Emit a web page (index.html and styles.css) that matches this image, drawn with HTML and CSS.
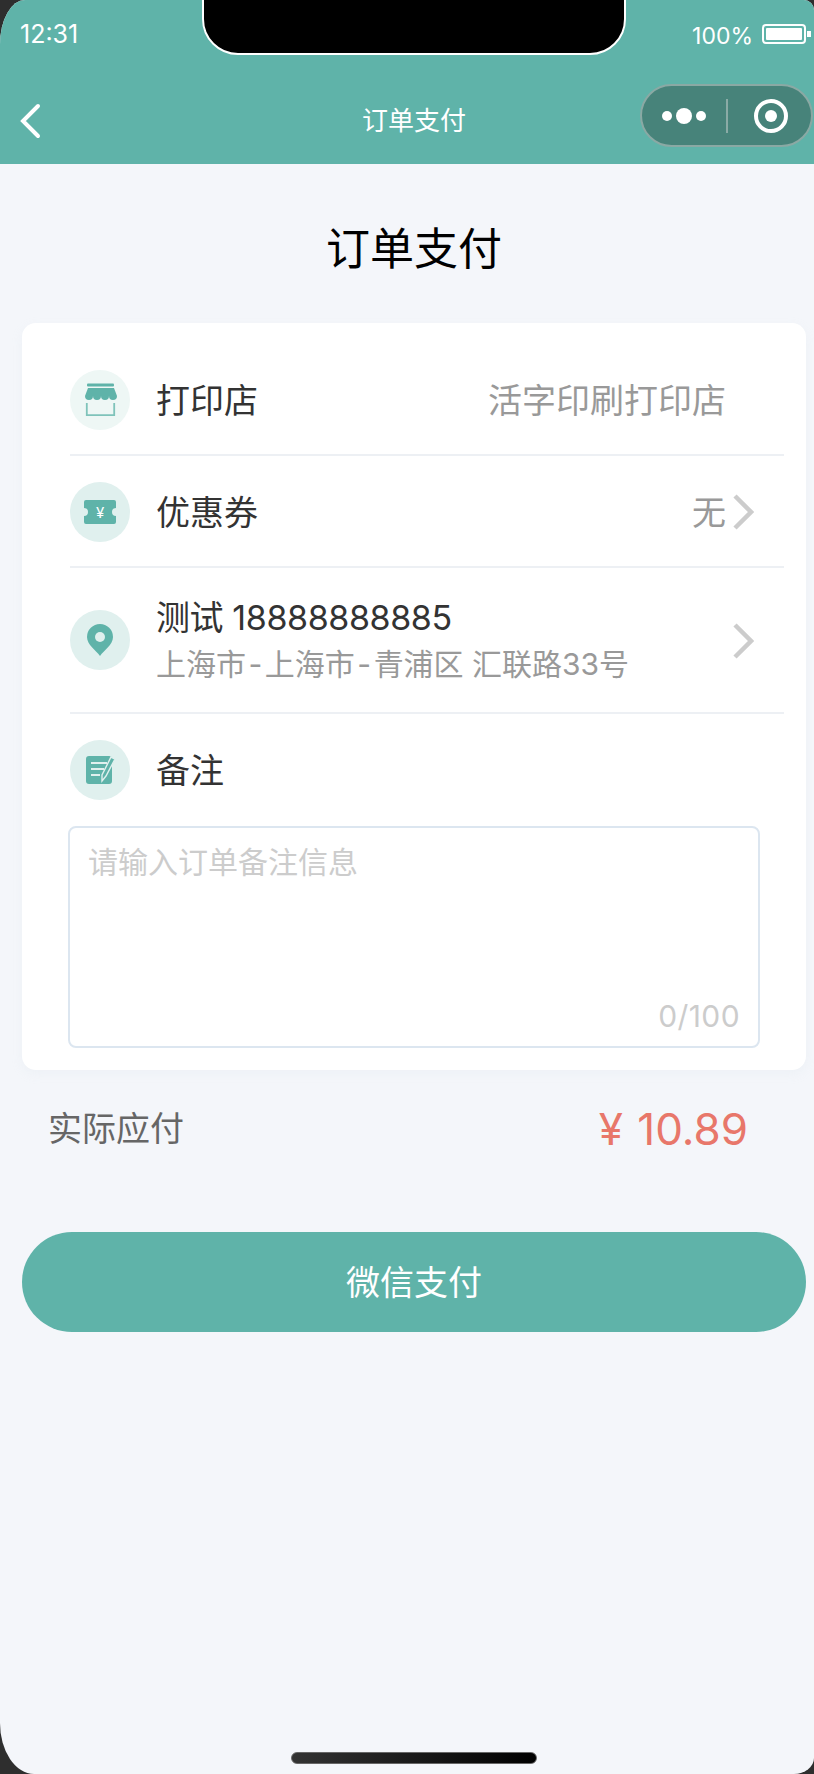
FILE: index.html
```html
<!DOCTYPE html>
<html>
<head>
    <meta charset="utf-8">
    <title>订单支付</title>
    <link rel="stylesheet" href="styles.css">
</head>
<body>
    <div class="phone">
        <div class="notch"></div>

        <header class="topbar">
            <div class="status">
                <span class="time">12:31</span>
                <div class="status-right">
                    <span class="battery-text">100%</span>
                    <svg class="battery" width="49" height="20" viewBox="0 0 49 20">
                        <rect x="1" y="1" width="42" height="18" rx="3" fill="none" stroke="#fff" stroke-width="2"/>
                        <rect x="4" y="4" width="36" height="12" rx="1" fill="#fff"/>
                        <path d="M45 7 L49 7 L49 13 L45 13 Z" fill="#fff"/>
                    </svg>
                </div>
            </div>
            <div class="nav">
                <svg class="back" width="22" height="36" viewBox="0 0 22 36">
                    <path d="M19 3 L4 18 L19 33" fill="none" stroke="#fff" stroke-width="4" stroke-linecap="round" stroke-linejoin="miter"/>
                </svg>
                <div class="nav-title">订单支付</div>
                <div class="capsule">
                    <div class="dots">
                        <span class="dot"></span>
                        <span class="dot dot-big"></span>
                        <span class="dot"></span>
                    </div>
                    <div class="capsule-line"></div>
                    <div class="target"><span class="target-in"></span></div>
                </div>
            </div>
        </header>

        <h1 class="page-title">订单支付</h1>

        <div class="card">
            <div class="row row-first">
                <div class="row-icon icon-light">
                    <svg width="60" height="60" viewBox="0 0 60 60">
                        <rect x="17" y="13.5" width="27" height="3" rx="1" fill="#5fb3a9"/>
                        <path d="M18 18 L44 18 L47 26 A4 4 0 0 1 39 26 A4 4 0 0 1 31 26 A4 4 0 0 1 23 26 A4 4 0 0 1 15 26 Z" fill="#5fb3a9"/>
                        <path d="M16.8 33 L16.8 45.2 L44.2 45.2 L44.2 33" fill="none" stroke="#7fc3ba" stroke-width="1.8"/>
                    </svg>
                </div>
                <div class="row-label">打印店</div>
                <div class="row-value">活字印刷打印店</div>
                <div class="row-arrow"></div>
            </div>

            <div class="row">
                <div class="row-icon">
                    <svg width="60" height="60" viewBox="0 0 60 60">
                        <path d="M16 18 L44 18 A2 2 0 0 1 46 20 L46 26 A4 4 0 0 0 46 34 L46 40 A2 2 0 0 1 44 42 L16 42 A2 2 0 0 1 14 40 L14 34 A4 4 0 0 0 14 26 L14 20 A2 2 0 0 1 16 18 Z" fill="#5fb3a9"/>
                        <text x="30" y="36" class="ticket-yen">¥</text>
                    </svg>
                </div>
                <div class="row-label">优惠券</div>
                <div class="row-value">无</div>
                <div class="row-arrow">
                    <svg width="22" height="36" viewBox="0 0 22 36">
                        <path d="M3 2 L19 18 L3 34" fill="none" stroke="#ccc" stroke-width="4.5"/>
                    </svg>
                </div>
            </div>

            <div class="row row-address">
                <div class="row-icon">
                    <svg width="60" height="60" viewBox="0 0 60 60">
                        <path d="M30 46 C26 40 17 35 17 27 A13 13 0 0 1 43 27 C43 35 34 40 30 46 Z" fill="#5fb3a9"/>
                        <circle cx="30" cy="27" r="5" fill="#e0f0ee"/>
                    </svg>
                </div>
                <div class="address">
                    <div class="row-label address-name">测试 18888888885</div>
                    <div class="address-sub">上海市<span class="dash">-</span>上海市<span class="dash">-</span>青浦区 汇联路33号</div>
                </div>
                <div class="row-arrow">
                    <svg width="22" height="36" viewBox="0 0 22 36">
                        <path d="M3 2 L19 18 L3 34" fill="none" stroke="#ccc" stroke-width="4.5"/>
                    </svg>
                </div>
            </div>

            <div class="row row-note">
                <div class="row-icon">
                    <svg width="60" height="60" viewBox="0 0 60 60">
                        <rect x="16" y="16" width="26" height="28" rx="3" fill="#5fb3a9"/>
                        <path d="M21 23 L37 23 M21 29 L34 29 M21 35 L30 35" stroke="#e0f0ee" stroke-width="2"/>
                        <path d="M45 19 L36 36 L32 41 L32 35 L41 17 Z" fill="#5fb3a9" stroke="#e0f0ee" stroke-width="1.4"/>
                    </svg>
                </div>
                <div class="row-label">备注</div>
            </div>

            <div class="note-box">
                <textarea class="note-input" placeholder="请输入订单备注信息"></textarea>
                <span class="note-count">0/100</span>
            </div>
        </div>

        <div class="total">
            <span class="total-label">实际应付</span>
            <span class="total-price">¥ 10.89</span>
        </div>

        <button class="pay-btn">微信支付</button>

        <div class="home-bar"></div>
    </div>
</body>
</html>
```

FILE: styles.css
```css
body {
    margin: 0;
    background-color: #2e2e2e;
    font-family: Inter, "Noto Sans CJK SC", sans-serif;
}

.phone {
    position: relative;
    width: 814px;
    height: 1774px;
    overflow: hidden;
    background-color: #f4f6fa;
    border-radius: 25px 10px 20px 34px / 44px 10px 16px 51px;
}

.notch {
    position: absolute;
    left: 202px;
    top: -2px;
    width: 420px;
    height: 53px;
    background-color: #000;
    border: 2px solid #fff;
    border-radius: 0 0 36px 36px;
}

.topbar {
    height: 164px;
    background-color: #5fb3a9;
    color: #fff;
}

.status {
    display: flex;
    justify-content: space-between;
    height: 68px;
    padding: 20px 6px 0 20px;
    box-sizing: border-box;
}

.time {
    font-size: 25px;
    line-height: 28px;
}

.status-right {
    display: flex;
    gap: 9px;
    padding-top: 3px;
}

.battery-text {
    font-size: 23px;
    line-height: 27px;
}

.battery {
    margin-top: 1px;
    margin-right: -3px;
}

.nav {
    display: flex;
    align-items: center;
    justify-content: space-between;
    height: 95px;
    padding: 0 1px 0 19px;
    position: relative;
}

.back {
    margin-top: 10px;
}

.nav-title {
    position: absolute;
    left: 14px;
    right: 0;
    top: 33px;
    text-align: center;
    font-size: 26px;
    line-height: 40px;
}

.capsule {
    display: flex;
    align-items: center;
    width: 173px;
    height: 63px;
    box-sizing: border-box;
    background-color: #47837a;
    border: 2px solid #8aa9a4;
    border-radius: 32px;
}

.dots {
    display: flex;
    align-items: center;
    gap: 4px;
    margin-left: 20px;
}

.dot {
    width: 10px;
    height: 10px;
    border-radius: 50%;
    background-color: #fff;
}

.dot-big {
    width: 16px;
    height: 16px;
}

.capsule-line {
    width: 2px;
    height: 34px;
    margin-left: 20px;
    background-color: #8aaba6;
}

.target {
    display: flex;
    align-items: center;
    justify-content: center;
    width: 34px;
    height: 34px;
    margin-left: 26px;
    box-sizing: border-box;
    border: 4px solid #fff;
    border-radius: 50%;
}

.target-in {
    width: 12px;
    height: 12px;
    border-radius: 50%;
    background-color: #fff;
}

.page-title {
    margin: 55px 0 44px;
    padding-left: 14px;
    text-align: center;
    font-size: 44px;
    line-height: 60px;
    font-weight: 400;
    color: #000;
}

.card {
    margin: 0 8px 0 22px;
    padding: 0 22px 22px 48px;
    background-color: #fff;
    border-radius: 14px;
    box-shadow: 0 4px 12px rgba(200, 210, 225, 0.12);
}

.row {
    display: flex;
    align-items: center;
    padding: 26px 0 24px;
    border-bottom: 2px solid #edf0f4;
}

.row-first {
    padding-top: 47px;
}

.row-address {
    height: 144px;
    box-sizing: content-box;
    padding: 0;
}

.row-note {
    padding: 26px 0 0;
    border-bottom: 0;
}

.row-icon {
    flex-shrink: 0;
    width: 60px;
    height: 60px;
    margin-right: 26px;
    background-color: #e0f0ee;
    border-radius: 50%;
}

.icon-light {
    background-color: #eef7f5;
}

.row-icon svg {
    display: block;
}

.ticket-yen {
    fill: #fff;
    font-size: 15px;
    text-anchor: middle;
}

.row-label {
    margin-top: 2px;
    font-size: 34px;
    line-height: 48px;
    color: #333;
}

.row-value {
    margin-top: 2px;
    margin-left: auto;
    font-size: 34px;
    line-height: 48px;
    color: #999;
}

.row-arrow {
    flex-shrink: 0;
    width: 58px;
    height: 36px;
    padding-left: 6px;
    box-sizing: border-box;
}

.row-arrow svg {
    display: block;
}

.row-address .row-arrow {
    margin-top: 2px;
}

.address {
    flex: 1;
}

.address-name {
    margin-top: -1px;
    margin-bottom: 1px;
    letter-spacing: -0.4px;
}

.address-sub {
    font-size: 30px;
    line-height: 42px;
    color: #999;
}

.dash {
    padding: 0 2.5px;
}

.note-box {
    position: relative;
    width: 692px;
    height: 222px;
    margin: 26px 0 0 -2px;
}

.note-input {
    display: block;
    width: 100%;
    height: 100%;
    padding: 13px 18px;
    box-sizing: border-box;
    background-color: #fff;
    border: 2px solid #dce6f0;
    border-radius: 8px;
    font-family: inherit;
    font-size: 30px;
    line-height: 42px;
    resize: none;
    outline: none;
}

.note-input::placeholder {
    color: #ccc;
}

.note-count {
    position: absolute;
    right: 20px;
    bottom: 12px;
    font-size: 30px;
    line-height: 40px;
    letter-spacing: 0.4px;
    color: #ccc;
}

.total {
    display: flex;
    align-items: center;
    justify-content: space-between;
    height: 60px;
    margin-top: 29px;
    padding: 0 66px 0 48px;
}

.total-label {
    margin-bottom: 6px;
    font-size: 34px;
    color: #666;
}

.total-price {
    font-size: 44px;
    word-spacing: 2px;
    color: #e8776a;
}

.pay-btn {
    display: block;
    width: 784px;
    height: 100px;
    margin: 73px 0 0 22px;
    padding: 0 0 4px;
    background-color: #5fb3a9;
    border: 0;
    border-radius: 50px;
    color: #fff;
    font-family: inherit;
    font-size: 34px;
}

.home-bar {
    position: absolute;
    left: 291px;
    top: 1752px;
    width: 246px;
    height: 12px;
    box-sizing: border-box;
    background: linear-gradient(to right, #333, #000);
    border: 1px solid #666;
    border-radius: 6px;
}
```
